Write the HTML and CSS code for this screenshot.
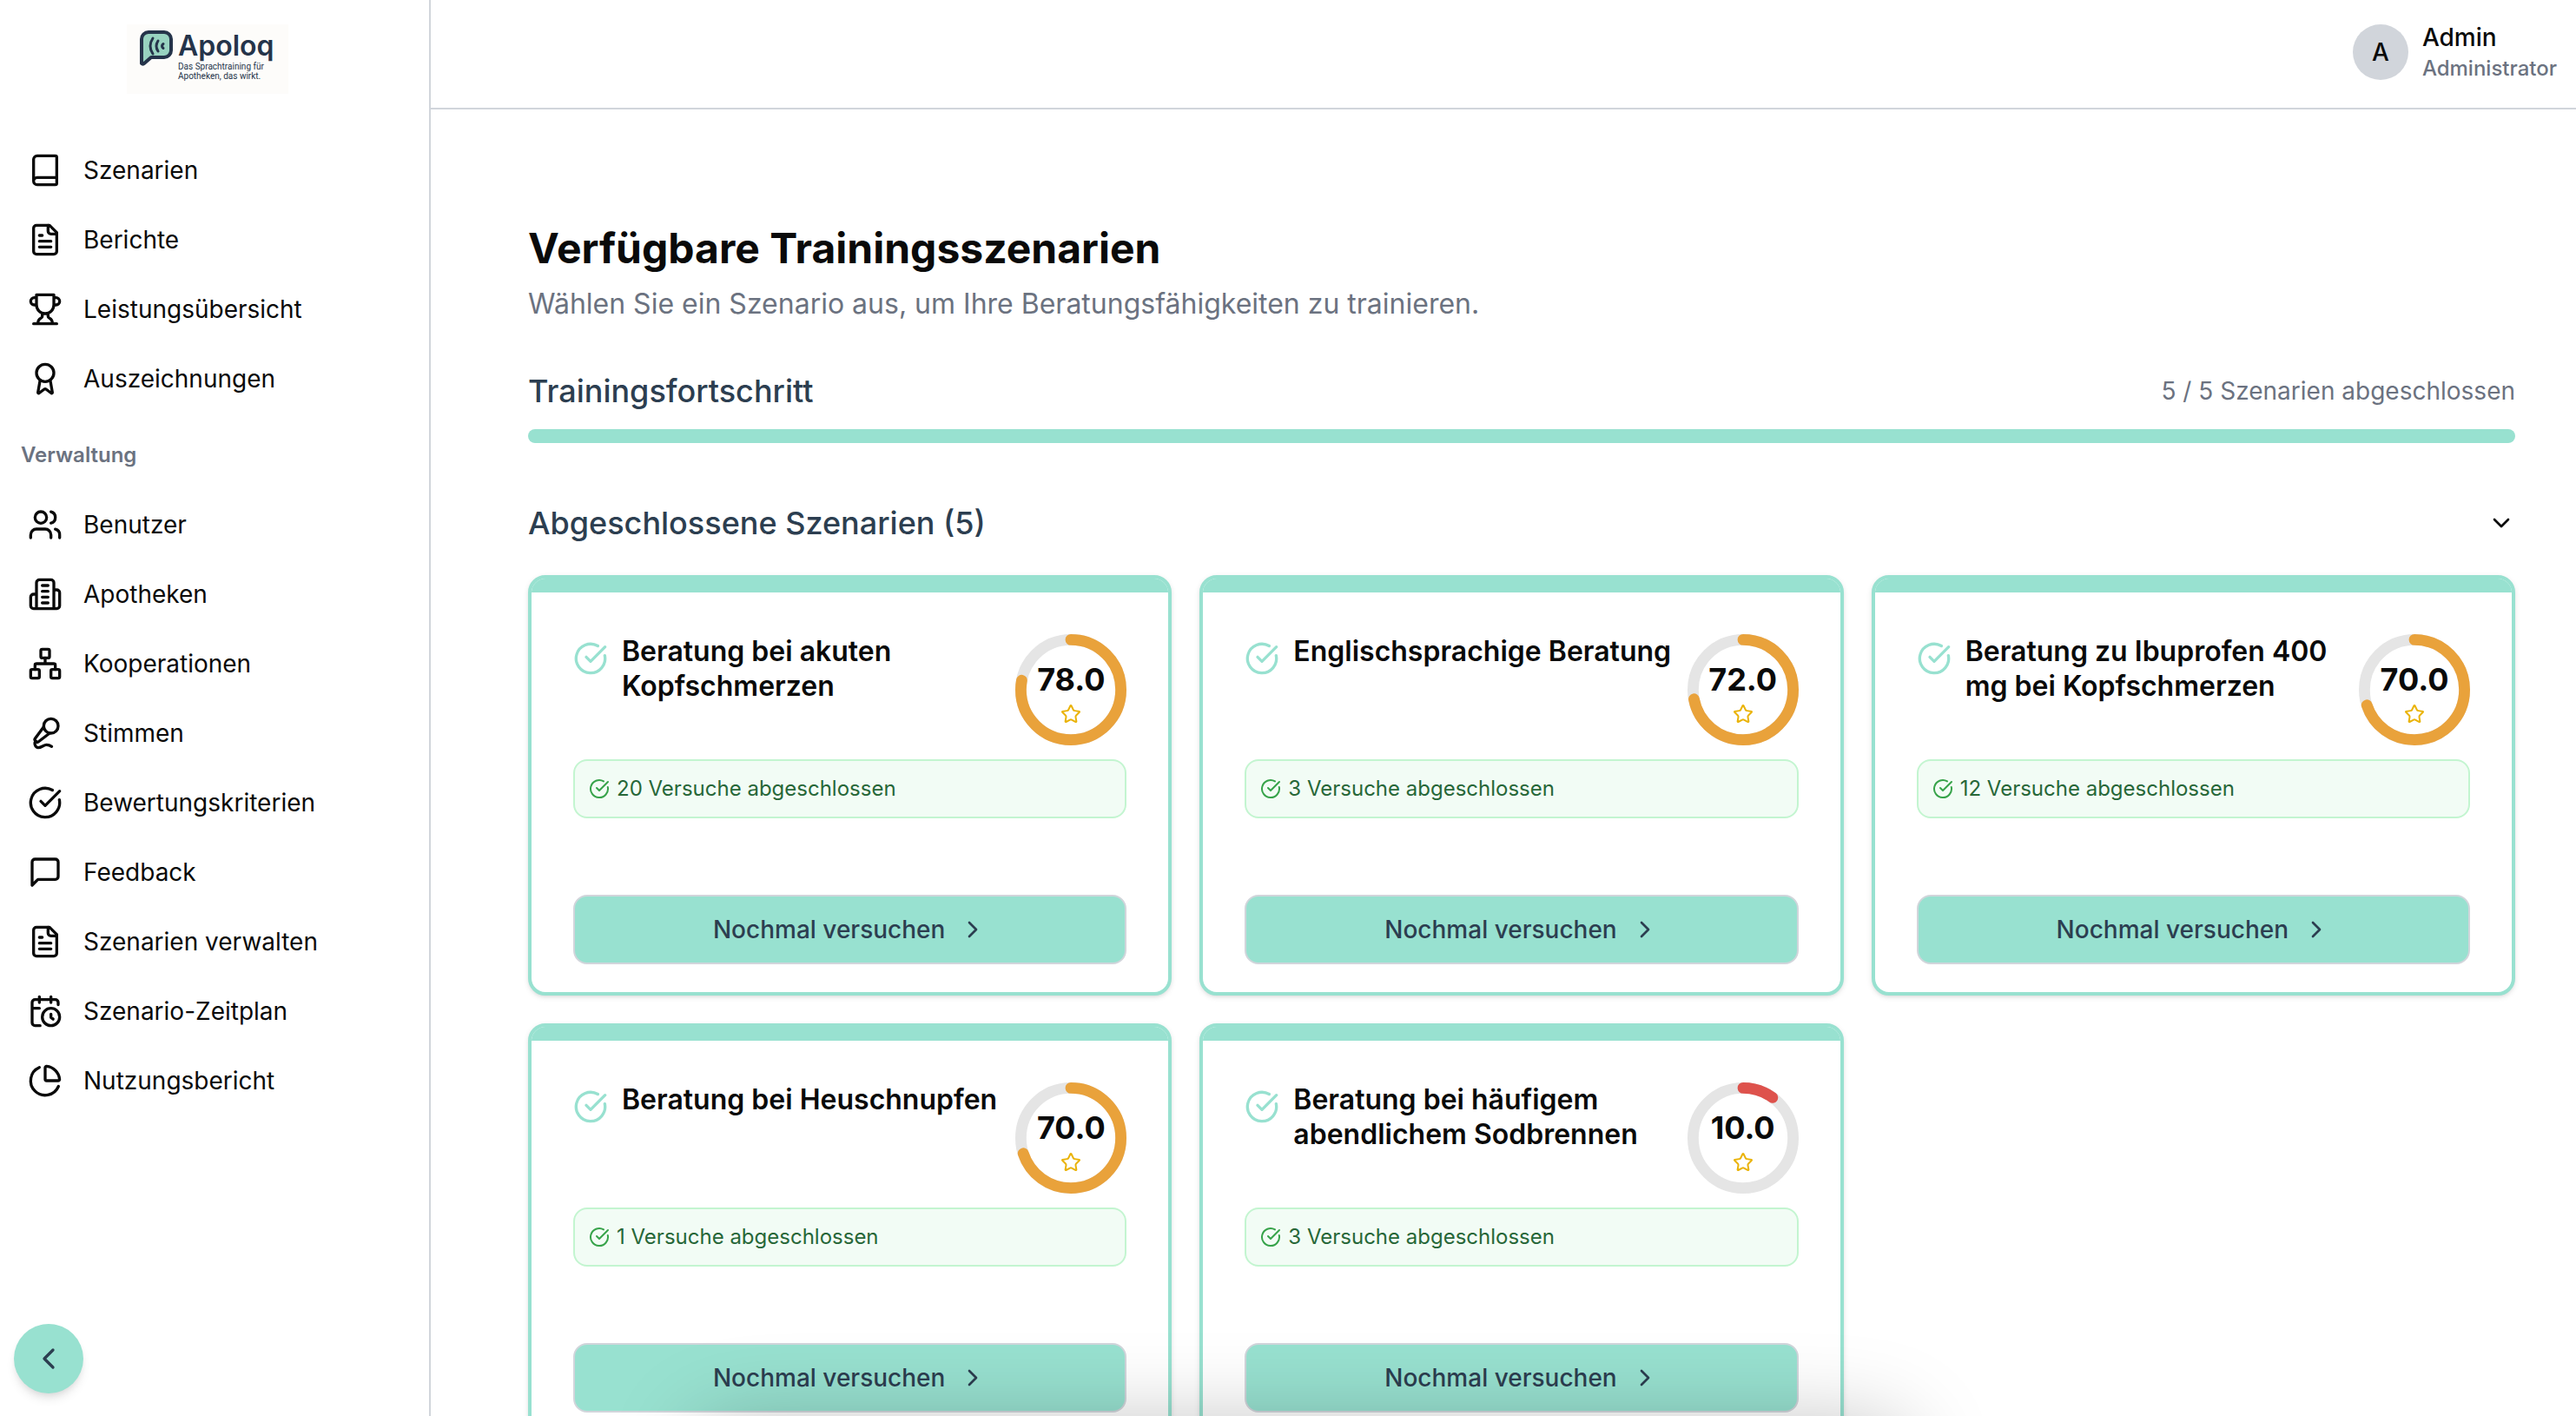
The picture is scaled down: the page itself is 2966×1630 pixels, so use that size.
FILE: index.html
```html
<!DOCTYPE html>
<html lang="de">
<head>
<meta charset="utf-8">
<meta name="viewport" content="width=device-width, initial-scale=1">
<title>Apoloq – Trainingsszenarien</title>
<link rel="stylesheet" href="styles.css">
</head>
<body>
<svg class="sprite" aria-hidden="true">
  <symbol id="book" viewBox="0 0 24 24"><path d="M4 19.5v-15A2.5 2.5 0 0 1 6.5 2H19a1 1 0 0 1 1 1v18a1 1 0 0 1-1 1H6.5a1 1 0 0 1 0-5H20"/></symbol>
  <symbol id="file" viewBox="0 0 24 24"><path d="M15 2H6a2 2 0 0 0-2 2v16a2 2 0 0 0 2 2h12a2 2 0 0 0 2-2V7Z"/><path d="M14 2v4a2 2 0 0 0 2 2h4M10 9H8M16 13H8M16 17H8"/></symbol>
  <symbol id="trophy" viewBox="0 0 24 24"><path d="M6 9H4.5a2.5 2.5 0 0 1 0-5H6M18 9h1.5a2.5 2.5 0 0 0 0-5H18M4 22h16M10 14.66V17c0 .55-.47.98-.97 1.21C7.85 18.75 7 20.24 7 22M14 14.66V17c0 .55.47.98.97 1.21C16.15 18.75 17 20.24 17 22M18 2H6v7a6 6 0 0 0 12 0V2Z"/></symbol>
  <symbol id="award" viewBox="0 0 24 24"><path d="m15.477 12.89 1.515 8.526a.5.5 0 0 1-.81.47l-3.58-2.687a1 1 0 0 0-1.197 0l-3.586 2.686a.5.5 0 0 1-.81-.469l1.514-8.526"/><circle cx="12" cy="8" r="6"/></symbol>
  <symbol id="users" viewBox="0 0 24 24"><path d="M16 21v-2a4 4 0 0 0-4-4H6a4 4 0 0 0-4 4v2M22 21v-2a4 4 0 0 0-3-3.87M16 3.13a4 4 0 0 1 0 7.75"/><circle cx="9" cy="7" r="4"/></symbol>
  <symbol id="building" viewBox="0 0 24 24"><path d="M6 22V4a2 2 0 0 1 2-2h8a2 2 0 0 1 2 2v18ZM6 12H4a2 2 0 0 0-2 2v6a2 2 0 0 0 2 2h2M18 9h2a2 2 0 0 1 2 2v9a2 2 0 0 1-2 2h-2M10 6h4M10 10h4M10 14h4M10 18h4"/></symbol>
  <symbol id="network" viewBox="0 0 24 24"><rect x="16" y="16" width="6" height="6" rx="1"/><rect x="2" y="16" width="6" height="6" rx="1"/><rect x="9" y="2" width="6" height="6" rx="1"/><path d="M5 16v-3a1 1 0 0 1 1-1h12a1 1 0 0 1 1 1v3M12 12V8"/></symbol>
  <symbol id="mic" viewBox="0 0 24 24"><path d="m11 7.601-5.994 8.19a1 1 0 0 0 .1 1.298l.817.818a1 1 0 0 0 1.314.087L15.09 12"/><path d="M16.5 21.174C15.5 20.5 14.372 20 13 20c-2.058 0-3.928 2.356-6 2-2.072-.356-2.775-3.369-1.5-4.5"/><circle cx="16" cy="7" r="5"/></symbol>
  <symbol id="check" viewBox="0 0 24 24"><path d="M21.801 10A10 10 0 1 1 17 3.335"/><path d="m9 11 3 3L22 4"/></symbol>
  <symbol id="message" viewBox="0 0 24 24"><path d="M21 15a2 2 0 0 1-2 2H7l-4 4V5a2 2 0 0 1 2-2h14a2 2 0 0 1 2 2z"/></symbol>
  <symbol id="calendar" viewBox="0 0 24 24"><path d="M21 7.5V6a2 2 0 0 0-2-2H5a2 2 0 0 0-2 2v14a2 2 0 0 0 2 2h3.500M16 2v4M8 2v4M3 10h5M17.500 17.500 16 16.300V14"/><circle cx="16" cy="16" r="6"/></symbol>
  <symbol id="pie" viewBox="0 0 24 24"><path d="M21 12c.552 0 1.005-.449.95-.998a10 10 0 0 0-8.953-8.951c-.55-.055-.998.398-.998.950v8a1 1 0 0 0 1 1z"/><path d="M21.210 15.890A10 10 0 1 1 8 2.830"/></symbol>
  <symbol id="left" viewBox="0 0 24 24"><path d="m15 18-6-6 6-6"/></symbol>
  <symbol id="right" viewBox="0 0 24 24"><path d="m9 18 6-6-6-6"/></symbol>
  <symbol id="down" viewBox="0 0 24 24"><path d="m6 9 6 6 6-6"/></symbol>
  <symbol id="star" viewBox="0 0 24 24"><path d="M11.525 2.295a.53.53 0 0 1 .95 0l2.310 4.679a2.123 2.123 0 0 0 1.595 1.160l5.166.756a.53.53 0 0 1 .294.904l-3.736 3.638a2.123 2.123 0 0 0-.611 1.878l.882 5.140a.53.53 0 0 1-.771.560l-4.618-2.428a2.122 2.122 0 0 0-1.973 0L6.396 21.010a.53.53 0 0 1-.770-.560l.881-5.139a2.122 2.122 0 0 0-.611-1.879L2.160 9.795a.53.53 0 0 1 .294-.906l5.165-.755a2.122 2.122 0 0 0 1.597-1.160z"/></symbol>
</svg>

<div class="app">
  <aside class="sidebar">
    <a class="logo" href="#" aria-label="Apoloq Startseite">
      <svg class="logo-mark" viewBox="0 0 38 41" aria-hidden="true">
        <path class="logo-bubble" d="M2 38V10a8 8 0 0 1 8-8h18a8 8 0 0 1 8 8v13a8 8 0 0 1-8 8H13l-8 7a2 2 0 0 1-3 0z"/>
        <path class="logo-wave" d="M15 9q-6 9 0 18M21 12q-4 6 0 12M27 15.500q-3 2.500 0 5"/>
      </svg>
      <span class="logo-text">
        <span class="logo-name">Apoloq</span>
        <span class="logo-claim">Das Sprachtraining für<br>Apotheken, das wirkt.</span>
      </span>
    </a>
    <nav class="nav">
      <a href="#"><svg class="icon"><use href="#book"/></svg>Szenarien</a>
      <a href="#"><svg class="icon"><use href="#file"/></svg>Berichte</a>
      <a href="#"><svg class="icon"><use href="#trophy"/></svg>Leistungsübersicht</a>
      <a href="#"><svg class="icon"><use href="#award"/></svg>Auszeichnungen</a>
      <h2 class="nav-title">Verwaltung</h2>
      <a href="#"><svg class="icon"><use href="#users"/></svg>Benutzer</a>
      <a href="#"><svg class="icon"><use href="#building"/></svg>Apotheken</a>
      <a href="#"><svg class="icon"><use href="#network"/></svg>Kooperationen</a>
      <a href="#"><svg class="icon"><use href="#mic"/></svg>Stimmen</a>
      <a href="#"><svg class="icon"><use href="#check"/></svg>Bewertungskriterien</a>
      <a href="#"><svg class="icon"><use href="#message"/></svg>Feedback</a>
      <a href="#"><svg class="icon"><use href="#file"/></svg>Szenarien verwalten</a>
      <a href="#"><svg class="icon"><use href="#calendar"/></svg>Szenario-Zeitplan</a>
      <a href="#"><svg class="icon"><use href="#pie"/></svg>Nutzungsbericht</a>
    </nav>
    <button class="collapse" type="button" aria-label="Seitenleiste einklappen"><svg class="icon"><use href="#left"/></svg></button>
  </aside>

  <div class="page">
    <header class="topbar">
      <span class="avatar">A</span>
      <div class="user">
        <span class="user-name">Admin</span>
        <span class="user-role">Administrator</span>
      </div>
    </header>

    <main class="content">
      <h1>Verfügbare Trainingsszenarien</h1>
      <p class="lead">Wählen Sie ein Szenario aus, um Ihre Beratungsfähigkeiten zu trainieren.</p>

      <section class="progress">
        <div class="row">
          <h2 id="progress-title">Trainingsfortschritt</h2>
          <span class="count">5 / 5 Szenarien abgeschlossen</span>
        </div>
        <progress class="bar" max="5" value="5" aria-labelledby="progress-title"></progress>
      </section>

      <section class="done">
        <div class="row">
          <h2>Abgeschlossene Szenarien (5)</h2>
          <button class="toggle" type="button" aria-label="Abschnitt einklappen"><svg class="icon small"><use href="#down"/></svg></button>
        </div>
        <div class="cards">
          <article class="card">
            <div class="card-head">
              <svg class="icon mint"><use href="#check"/></svg>
              <h3>Beratung bei akuten Kopfschmerzen</h3>
              <div class="score">
                <svg class="ring" viewBox="0 0 100 100"><circle class="track" cx="50" cy="50" r="45"/><circle class="value" cx="50" cy="50" r="45" pathLength="100" stroke-dasharray="78 100"/></svg>
                <span>78.0</span><svg class="icon star"><use href="#star"/></svg>
              </div>
            </div>
            <p class="attempts"><svg class="icon tiny"><use href="#check"/></svg>20 Versuche abgeschlossen</p>
            <button class="retry" type="button">Nochmal versuchen<svg class="icon small"><use href="#right"/></svg></button>
          </article>
          <article class="card">
            <div class="card-head">
              <svg class="icon mint"><use href="#check"/></svg>
              <h3>Englischsprachige Beratung</h3>
              <div class="score">
                <svg class="ring" viewBox="0 0 100 100"><circle class="track" cx="50" cy="50" r="45"/><circle class="value" cx="50" cy="50" r="45" pathLength="100" stroke-dasharray="72 100"/></svg>
                <span>72.0</span><svg class="icon star"><use href="#star"/></svg>
              </div>
            </div>
            <p class="attempts"><svg class="icon tiny"><use href="#check"/></svg>3 Versuche abgeschlossen</p>
            <button class="retry" type="button">Nochmal versuchen<svg class="icon small"><use href="#right"/></svg></button>
          </article>
          <article class="card">
            <div class="card-head">
              <svg class="icon mint"><use href="#check"/></svg>
              <h3>Beratung zu Ibuprofen 400 mg bei Kopfschmerzen</h3>
              <div class="score">
                <svg class="ring" viewBox="0 0 100 100"><circle class="track" cx="50" cy="50" r="45"/><circle class="value" cx="50" cy="50" r="45" pathLength="100" stroke-dasharray="70 100"/></svg>
                <span>70.0</span><svg class="icon star"><use href="#star"/></svg>
              </div>
            </div>
            <p class="attempts"><svg class="icon tiny"><use href="#check"/></svg>12 Versuche abgeschlossen</p>
            <button class="retry" type="button">Nochmal versuchen<svg class="icon small"><use href="#right"/></svg></button>
          </article>
          <article class="card">
            <div class="card-head">
              <svg class="icon mint"><use href="#check"/></svg>
              <h3>Beratung bei Heuschnupfen</h3>
              <div class="score">
                <svg class="ring" viewBox="0 0 100 100"><circle class="track" cx="50" cy="50" r="45"/><circle class="value" cx="50" cy="50" r="45" pathLength="100" stroke-dasharray="70 100"/></svg>
                <span>70.0</span><svg class="icon star"><use href="#star"/></svg>
              </div>
            </div>
            <p class="attempts"><svg class="icon tiny"><use href="#check"/></svg>1 Versuche abgeschlossen</p>
            <button class="retry" type="button">Nochmal versuchen<svg class="icon small"><use href="#right"/></svg></button>
          </article>
          <article class="card">
            <div class="card-head">
              <svg class="icon mint"><use href="#check"/></svg>
              <h3>Beratung bei häufigem abendlichem Sodbrennen</h3>
              <div class="score">
                <svg class="ring" viewBox="0 0 100 100"><circle class="track" cx="50" cy="50" r="45"/><circle class="value low" cx="50" cy="50" r="45" pathLength="100" stroke-dasharray="10 100"/></svg>
                <span>10.0</span><svg class="icon star"><use href="#star"/></svg>
              </div>
            </div>
            <p class="attempts"><svg class="icon tiny"><use href="#check"/></svg>3 Versuche abgeschlossen</p>
            <button class="retry" type="button">Nochmal versuchen<svg class="icon small"><use href="#right"/></svg></button>
          </article>
        </div>
      </section>
    </main>
  </div>
</div>
<div class="dock-shadow" aria-hidden="true"></div>
</body>
</html>
```
FILE: styles.css
```css
:root {
  --mint: #98e1d0;
  --ink: #0a0a0a;
  --navy: #2c3e50;
  --muted: #6b7280;
  --line: #d1d5db;
}

* { box-sizing: border-box; }

body {
  margin: 0;
  background: #fff;
  color: var(--ink);
  font-family: Inter, "Liberation Sans", sans-serif;
  font-size: 28px;
  line-height: 40px;
}

h1, h2, h3, p { margin: 0; }

button {
  font: inherit;
  color: inherit;
  cursor: pointer;
}

.sprite {
  position: absolute;
  width: 0;
  height: 0;
}

.icon {
  flex: none;
  width: 40px;
  height: 40px;
  fill: none;
  stroke: currentColor;
  stroke-width: 2;
  stroke-linecap: round;
  stroke-linejoin: round;
}

.icon.small { width: 32px; height: 32px; }
.icon.tiny { width: 24px; height: 24px; color: #37a34a; }
.icon.mint { margin-top: 8px; color: var(--mint); }
.icon.star { width: 24px; height: 24px; color: #eab308; }

.app {
  display: flex;
  height: 100vh;
  overflow: hidden;
}

/* Sidebar */
.sidebar {
  display: flex;
  flex: none;
  flex-direction: column;
  width: 496px;
  padding: 28px 16px 26px;
  border-right: 2px solid var(--line);
}

.logo {
  display: flex;
  align-self: center;
  gap: 6px;
  width: 186px;
  height: 80px;
  margin-right: 16px;
  padding: 7px 0 0 15px;
  background: #fdfcfa;
  color: #25344a;
  text-decoration: none;
}

.logo-mark { width: 38px; height: 41px; }
.logo-bubble { fill: #98d3c0; stroke: #25344a; stroke-width: 4; stroke-linejoin: round; }
.logo-wave { fill: none; stroke: #25344a; stroke-width: 3; stroke-linecap: round; }

.logo-text { display: flex; flex-direction: column; }
.logo-name { font-size: 32px; font-weight: 600; line-height: 36px; }
.logo-claim { font-family: Roboto, sans-serif; font-size: 10px; line-height: 11px; white-space: nowrap; }

.nav {
  display: flex;
  flex-direction: column;
  gap: 8px;
  margin-top: 52px;
}

.nav a {
  display: flex;
  align-items: center;
  gap: 24px;
  height: 72px;
  padding: 0 16px;
  color: inherit;
  text-decoration: none;
}

.nav-title {
  padding: 16px 8px 8px;
  color: var(--muted);
  font-size: 24px;
  font-weight: 600;
  line-height: 56px;
}

.collapse {
  display: grid;
  place-items: center;
  width: 80px;
  height: 80px;
  margin-top: auto;
  padding: 0;
  border: 0;
  border-radius: 50%;
  background: var(--mint);
  color: var(--navy);
  box-shadow: 0 8px 12px -2px rgb(0 0 0 / 10%), 0 4px 8px -4px rgb(0 0 0 / 10%);
}

/* Top bar */
.page {
  flex: 1;
  min-width: 0;
}

.topbar {
  display: flex;
  align-items: center;
  justify-content: flex-end;
  gap: 16px;
  height: 126px;
  padding: 0 22px 4px;
  border-bottom: 2px solid var(--line);
}

.avatar {
  display: grid;
  place-items: center;
  width: 64px;
  height: 64px;
  border-radius: 50%;
  background: var(--line);
  font-weight: 500;
}

.user { display: flex; flex-direction: column; gap: 2px; font-weight: 500; }
.user-name { line-height: 36px; }
.user-role { color: var(--muted); font-size: 24px; line-height: 32px; }

/* Content */
.content { padding: 128px 70px 64px 112px; }

h1 { font-size: 48px; font-weight: 700; line-height: 64px; }

.lead {
  color: var(--muted);
  font-size: 32px;
  line-height: 64px;
}

.row {
  display: flex;
  align-items: center;
  justify-content: space-between;
}

.row h2 {
  color: var(--navy);
  font-size: 36px;
  font-weight: 500;
  line-height: 56px;
}

.count { color: var(--muted); }

.progress { padding-top: 40px; }

.bar {
  display: block;
  width: 100%;
  height: 16px;
  margin-top: 16px;
  border: 0;
  border-radius: 8px;
  background: #e5e7eb;
  overflow: hidden;
  appearance: none;
}

.bar::-webkit-progress-bar { background: #e5e7eb; }
.bar::-webkit-progress-value { background: var(--mint); }
.bar::-moz-progress-bar { background: var(--mint); }

.done { padding-top: 64px; }

.toggle {
  display: flex;
  padding: 0;
  border: 0;
  background: none;
}

.cards {
  display: grid;
  grid-template-columns: repeat(3, 1fr);
  gap: 32px;
  margin-top: 32px;
}

.card {
  display: flex;
  flex-direction: column;
  padding: 0 48px 32px;
  border: 4px solid var(--mint);
  border-radius: 20px;
  background: #fff;
  box-shadow: 0 2px 6px rgb(0 0 0 / 10%), 0 2px 4px -2px rgb(0 0 0 / 10%);
  overflow: hidden;
}

.card::before {
  content: "";
  height: 16px;
  margin: 0 -48px 48px;
  background: var(--mint);
}

.card-head {
  display: flex;
  align-items: flex-start;
  gap: 16px;
}

.card h3 {
  flex: 1;
  font-size: 32px;
  font-weight: 600;
  line-height: 40px;
}

.score {
  display: grid;
  flex: none;
  grid-template-rows: 56px 24px;
  place-content: center;
  place-items: center;
  position: relative;
  width: 128px;
  height: 128px;
  font-size: 36px;
  font-weight: 700;
}

.ring {
  position: absolute;
  inset: 0;
  fill: none;
  stroke-width: 10;
  transform: rotate(-90deg);
}

.track { stroke: #e5e5e5; }
.value { stroke: #e9a23b; stroke-linecap: round; }
.value.low { stroke: #de524c; }

.attempts {
  display: flex;
  align-items: center;
  gap: 8px;
  height: 68px;
  margin: 16px 0 88px;
  padding: 0 16px;
  border: 2px solid #c3f5d0;
  border-radius: 16px;
  background: #f2fcf5;
  color: #276738;
  font-size: 24px;
}

.retry {
  display: flex;
  align-items: center;
  justify-content: center;
  gap: 16px;
  height: 80px;
  border: 2px solid var(--line);
  border-radius: 16px;
  background: var(--mint);
  color: var(--navy);
  font-weight: 500;
}

/* Soft shade along the lower edge of the window */
.dock-shadow {
  position: fixed;
  top: calc(100vh + 10px);
  left: 27%;
  right: 26%;
  height: 120px;
  border-radius: 40px;
  box-shadow: 0 0 100px rgb(0 0 0 / 25%);
  pointer-events: none;
}
```
